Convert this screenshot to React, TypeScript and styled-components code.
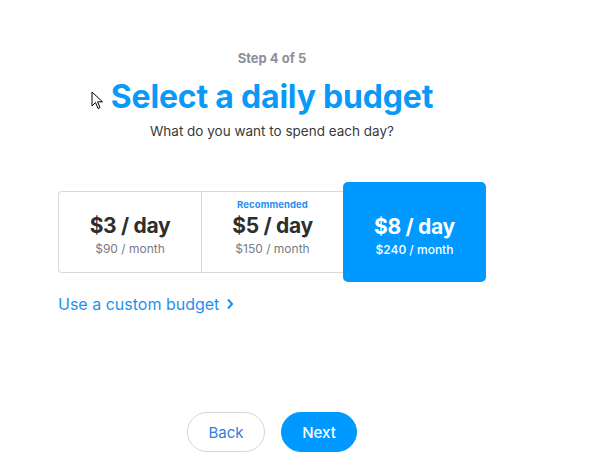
import React from "react";
import styled, { createGlobalStyle } from "styled-components";

const Global = createGlobalStyle`
  html, body { margin: 0; padding: 0; background: #ffffff; }
  body { font-family: "Inter", "Roboto", sans-serif; color: #333; }
`;

const Page = styled.div`
  position: relative;
  width: 544px;
  height: 468px;
  display: flex;
  flex-direction: column;
  align-items: center;
  padding-top: 50px;
  box-sizing: border-box;
`;

const Step = styled.div`
  font-size: 13px;
  font-weight: 700;
  color: #8c9099;
  line-height: 16px;
`;

const Title = styled.h1`
  margin: 12px 0 0;
  font-family: "Inter", sans-serif;
  font-size: 32px;
  font-weight: 700;
  letter-spacing: -0.2px;
  color: #0a99f7;
  line-height: 38px;
`;

const Subtitle = styled.p`
  margin: 7px 0 0;
  font-size: 13.5px;
  color: #3a3a3a;
  line-height: 16px;
`;

const Options = styled.div`
  margin-top: 43px;
  display: flex;
  align-items: center;
  width: 428px;
`;

const Group = styled.div`
  display: flex;
  border: 1px solid #d9d9d9;
  border-right: none;
  border-radius: 4px 0 0 4px;
  height: 82px;
  box-sizing: border-box;
`;

const Card = styled.div<{ $divider?: boolean }>`
  position: relative;
  width: 142px;
  display: flex;
  flex-direction: column;
  align-items: center;
  justify-content: center;
  padding-top: 6px;
  border-left: ${(p) => (p.$divider ? "1px solid #d9d9d9" : "none")};
  box-sizing: border-box;
`;

const Selected = styled.div`
  width: 143px;
  height: 100px;
  border-radius: 5px;
  background: #0099ff;
  color: #fff;
  display: flex;
  flex-direction: column;
  align-items: center;
  justify-content: center;
  padding-top: 8px;
  box-sizing: border-box;
`;

const Price = styled.div<{ $light?: boolean }>`
  font-size: 21px;
  font-weight: 700;
  letter-spacing: -0.3px;
  line-height: 24px;
  color: ${(p) => (p.$light ? "#ffffff" : "#2e2e2e")};
`;

const Monthly = styled.div<{ $light?: boolean }>`
  margin-top: 4px;
  font-size: 12px;
  line-height: 14px;
  font-weight: ${(p) => (p.$light ? 500 : 400)};
  color: ${(p) => (p.$light ? "#ffffff" : "#777b82")};
`;

const Badge = styled.div`
  position: absolute;
  top: 7px;
  left: 0;
  right: 0;
  text-align: center;
  font-size: 9.5px;
  font-weight: 700;
  color: #2a8ff0;
  letter-spacing: 0.1px;
`;

const CustomLink = styled.a`
  align-self: flex-start;
  margin-left: 58px;
  margin-top: 12px;
  display: flex;
  align-items: center;
  gap: 7px;
  font-size: 16px;
  color: #1e90f0;
  text-decoration: none;
  cursor: pointer;
  line-height: 20px;
`;

const Actions = styled.div`
  margin-top: 98px;
  display: flex;
  gap: 16px;
`;

const PillButton = styled.button<{ $primary?: boolean }>`
  height: 40px;
  padding: 0;
  width: ${(p) => (p.$primary ? "76px" : "78px")};
  border-radius: 20px;
  font-family: "Inter", sans-serif;
  font-size: 15px;
  font-weight: ${(p) => (p.$primary ? 500 : 400)};
  border: 1px solid ${(p) => (p.$primary ? "#0099ff" : "#d6d6d6")};
  background: ${(p) => (p.$primary ? "#0099ff" : "#ffffff")};
  color: ${(p) => (p.$primary ? "#ffffff" : "#2f7fe0")};
  cursor: pointer;
`;

const Cursor = styled.svg`
  position: absolute;
  left: 91px;
  top: 91px;
`;

export default function App() {
  return (
    <>
      <Global />
      <Page>
        <Cursor width="13" height="20" viewBox="0 0 13 20">
          <path
            d="M1 1 L1 15 L4.5 11.5 L7 17.5 L9 16.6 L6.6 10.8 L11.5 10.8 Z"
            fill="#ffffff"
            stroke="#000000"
            strokeWidth="1"
            strokeLinejoin="miter"
          />
        </Cursor>
        <Step>Step 4 of 5</Step>
        <Title>Select a daily budget</Title>
        <Subtitle>What do you want to spend each day?</Subtitle>
        <Options>
          <Group>
            <Card>
              <Price>$3 / day</Price>
              <Monthly>$90 / month</Monthly>
            </Card>
            <Card $divider>
              <Badge>Recommended</Badge>
              <Price>$5 / day</Price>
              <Monthly>$150 / month</Monthly>
            </Card>
          </Group>
          <Selected>
            <Price $light>$8 / day</Price>
            <Monthly $light>$240 / month</Monthly>
          </Selected>
        </Options>
        <CustomLink>
          Use a custom budget
          <svg width="8" height="12" viewBox="0 0 8 12">
            <path d="M2 1.5 L6 6 L2 10.5" fill="none" stroke="#1e90f0" strokeWidth="2" />
          </svg>
        </CustomLink>
        <Actions>
          <PillButton>Back</PillButton>
          <PillButton $primary>Next</PillButton>
        </Actions>
      </Page>
    </>
  );
}
